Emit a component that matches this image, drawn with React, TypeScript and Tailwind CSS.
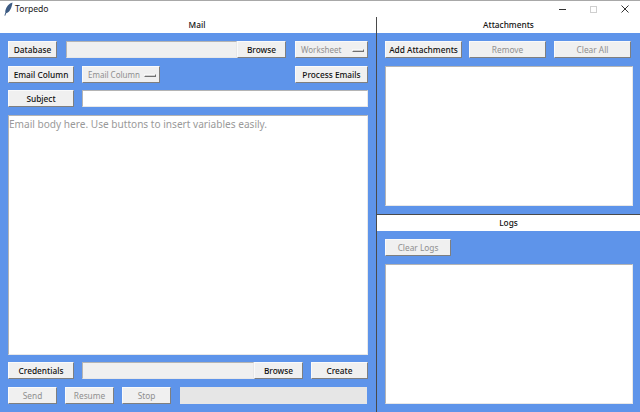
import { ReactNode } from "react";

const raised = "border border-t-[#fafafa] border-l-[#fafafa] border-r-[#7f7f7f] border-b-[#7f7f7f] bg-[#f0f0f0]";
const sunken = "border border-t-[#b4b4b4] border-l-[#b4b4b4] border-r-[#e8e8e8] border-b-[#e8e8e8]";

function Btn({ children, className, disabled }: { children: ReactNode; className: string; disabled?: boolean }) {
  return (
    <button
      type="button"
      className={`${raised} h-[17px] shrink-0 flex items-center justify-center pt-px whitespace-nowrap text-[8.3px] leading-none ${disabled ? "text-[#8f8f8f]" : "text-[#111] font-medium"} ${className}`}
    >
      {children}
    </button>
  );
}

function Menu({ label, className }: { label: string; className: string }) {
  return (
    <div className={`${raised} h-[17px] shrink-0 flex items-center justify-between pl-[5px] pr-[3px] pt-px whitespace-nowrap text-[8px] leading-none text-[#8f8f8f] ${className}`}>
      <span>{label}</span>
      <span className="w-[12px] h-[3px] border border-t-[#f8f8f8] border-l-[#f8f8f8] border-r-[#707070] border-b-[#707070] bg-[#cfcfcf]" />
    </div>
  );
}

function Field({ className, white }: { className: string; white?: boolean }) {
  return <div className={`${sunken} h-[17px] ${white ? "bg-white" : "bg-[#f0f0f0]"} ${className}`} />;
}

function Header({ title, className = "" }: { title: string; className?: string }) {
  return <div className={`h-[16px] shrink-0 bg-white flex items-center justify-center pt-px text-[8.3px] font-medium leading-none text-[#111] ${className}`}>{title}</div>;
}

export default function App() {
  return (
    <div className="w-[640px] h-[412px] overflow-hidden bg-white flex flex-col font-['Noto_Sans',sans-serif]">
      {/* title bar */}
      <div className="h-[17px] shrink-0 border-t border-[#a8a8a8] flex items-center pl-[3px] bg-white">
        <svg width="11" height="14" viewBox="0 0 11 14" className="mr-px">
          <path d="M9.5 0.5C6 1.5 3.5 4.5 2.5 8 2.2 9.2 2.2 10 2.4 10.6L1.4 13.5 2.2 13.7 3.2 11.2C5.5 10.8 7.5 8 8.4 5.2 8.9 3.6 9.4 2 9.5 0.5Z" fill="#3c5a82" />
        </svg>
        <span className="text-[8.6px] leading-none text-[#222]">Torpedo</span>
        <div className="ml-auto flex items-center">
          <span className="w-[7px] h-px bg-[#333] mr-[24px]" />
          <span className="w-[7px] h-[7px] border border-[#cfcfcf] mr-[24px]" />
          <svg width="8" height="8" viewBox="0 0 8 8" className="mr-[11px]">
            <path d="M0.5 0.5L7.5 7.5M7.5 0.5L0.5 7.5" stroke="#333" strokeWidth="1" fill="none" />
          </svg>
        </div>
      </div>

      <div className="flex-1 flex min-h-0">
        {/* mail panel */}
        <div className="w-[376px] shrink-0 flex flex-col">
          <Header title="Mail" className="pl-[18px]" />
          <div className="flex-1 bg-[#5e94ea] px-[8px] pt-[8px] pb-[8px] flex flex-col">
            <div className="flex">
              <Btn className="w-[49px]">Database</Btn>
              <Field className="w-[171px] ml-[9px]" />
              <Btn className="w-[49px]">Browse</Btn>
              <Menu label="Worksheet" className="w-[73px] ml-[9px]" />
            </div>
            <div className="flex mt-[8px]">
              <Btn className="w-[66px]">Email Column</Btn>
              <Menu label="Email Column" className="w-[78px] ml-[8px]" />
              <Btn className="w-[73px] ml-auto">Process Emails</Btn>
            </div>
            <div className="flex mt-[7px]">
              <Btn className="w-[66px]">Subject</Btn>
              <Field className="flex-1 ml-[8px]" white />
            </div>
            <div className={`${sunken} flex-1 mt-[8px] bg-white px-0 py-px text-[10.1px] leading-[14px] text-[#999]`}>
              Email body here. Use buttons to insert variables easily.
            </div>
            <div className="flex mt-[7px]">
              <Btn className="w-[66px]">Credentials</Btn>
              <Field className="w-[172px] ml-[8px]" />
              <Btn className="w-[49px]">Browse</Btn>
              <Btn className="w-[57px] ml-[8px]">Create</Btn>
            </div>
            <div className="flex mt-[8px]">
              <Btn className="w-[49px]" disabled>Send</Btn>
              <Btn className="w-[49px] ml-[8px]" disabled>Resume</Btn>
              <Btn className="w-[49px] ml-[8px]" disabled>Stop</Btn>
              <div className="h-[17px] w-[187px] ml-[9px] bg-[#e6e6e6]" />
            </div>
          </div>
        </div>

        <div className="w-px shrink-0 bg-[#4a4a4a]" />

        {/* right side */}
        <div className="flex-1 flex flex-col">
          <Header title="Attachments" />
          <div className="h-[181px] shrink-0 bg-[#5e94ea] px-[8px] pt-[8px] pb-[8px] flex flex-col">
            <div className="flex">
              <Btn className="w-[77px]">Add Attachments</Btn>
              <Btn className="w-[77px] ml-[7px]" disabled>Remove</Btn>
              <Btn className="w-[77px] ml-[8px]" disabled>Clear All</Btn>
            </div>
            <div className={`${sunken} flex-1 mt-[8px] bg-white mr-[-1px]`} />
          </div>
          <div className="h-px shrink-0 bg-[#4a4a4a]" />
          <Header title="Logs" />
          <div className="flex-1 bg-[#5e94ea] px-[8px] pt-[8px] pb-[8px] flex flex-col">
            <Btn className="w-[66px]" disabled>Clear Logs</Btn>
            <div className={`${sunken} flex-1 mt-[8px] bg-white mr-[-1px]`} />
          </div>
        </div>
      </div>
    </div>
  );
}
